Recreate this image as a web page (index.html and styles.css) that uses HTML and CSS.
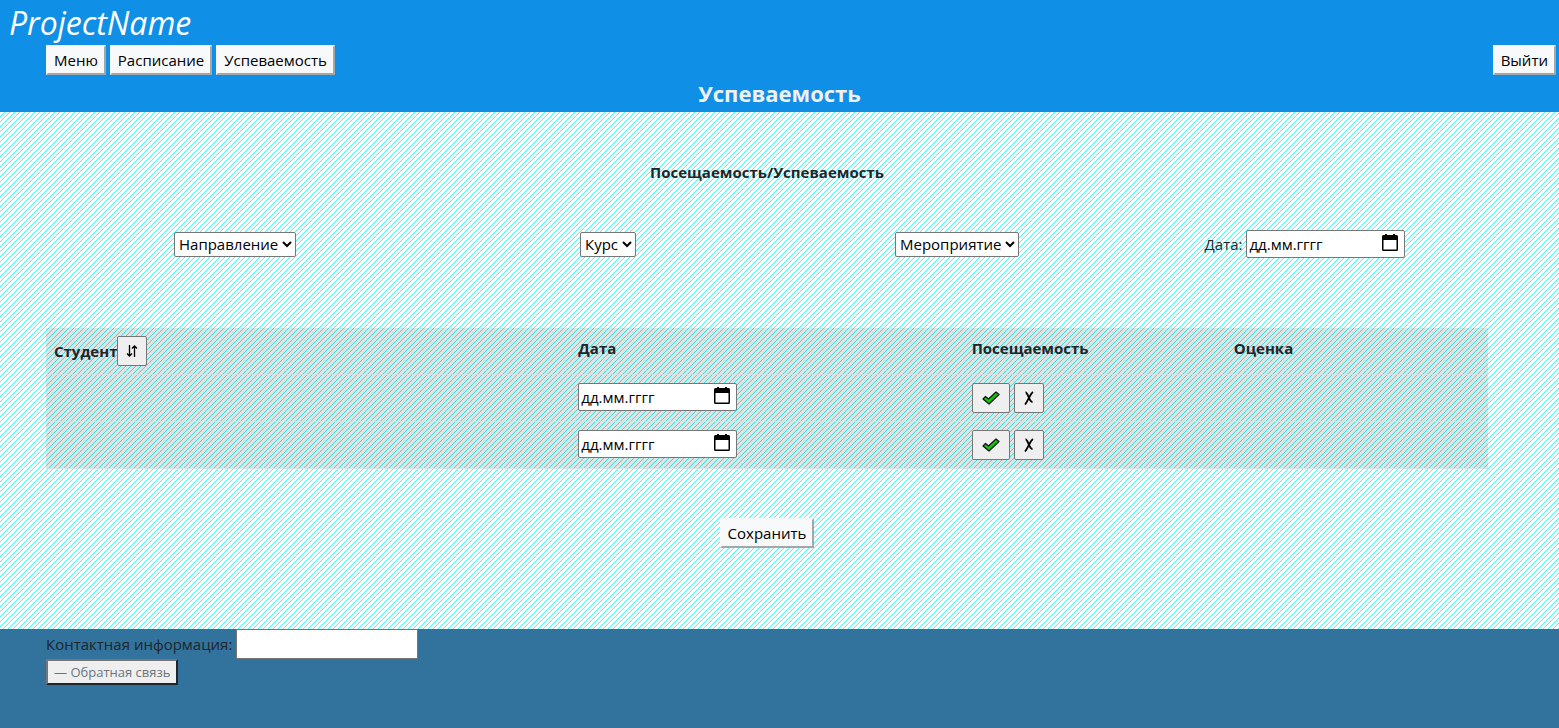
FILE: index.html
```html
<!DOCTYPE html>
<html lang="ru">
<head>
<meta charset="utf-8">
<title>Успеваемость</title>
<link rel="stylesheet" href="styles.css">
</head>
<body>
<svg class="sprite" aria-hidden="true">
  <symbol id="calendar" viewBox="0 0 16 17">
    <path d="M3 0h2v1h6V0h2v1h1.500Q16 1 16 2.500V15.500Q16 17 14.500 17h-13Q0 17 0 15.500v-13Q0 1 1.500 1H3zM1.500 6v9.500h13V6z" fill="#000" fill-rule="evenodd"/>
  </symbol>
  <symbol id="check" viewBox="0 0 18 14">
    <path d="M1 8l2.500-2.500 3 2.500L14 1l3 2.500L7 13z" fill="#16c60c" stroke="#111" stroke-width="1.200" stroke-linejoin="round"/>
  </symbol>
  <symbol id="sort" viewBox="0 0 14 14">
    <path d="M4.500 1v11M2 9.500L4.500 12 7 9.500M9.500 13V2M7 4.500L9.500 2 12 4.500" fill="none" stroke="#000" stroke-width="1.300"/>
  </symbol>
  <symbol id="cross" viewBox="0 0 10 14">
    <path d="M1.500 1.500C4 1 5 11 8.500 11M9 1C6 3 4 10 1 13.500" fill="none" stroke="#000" stroke-width="1.800"/>
  </symbol>
</svg>
<header class="header">
  <div class="brand">ProjectName</div>
  <nav class="nav">
    <button class="btn" type="button">Меню</button>
    <button class="btn" type="button">Расписание</button>
    <button class="btn" type="button">Успеваемость</button>
    <button class="btn exit" type="button">Выйти</button>
  </nav>
  <h1 class="page-title">Успеваемость</h1>
</header>
<main class="main">
  <h2 class="section-title">Посещаемость/Успеваемость</h2>
  <div class="filters">
    <select class="select" aria-label="Направление"><option>Направление</option></select>
    <select class="select" aria-label="Курс"><option>Курс</option></select>
    <select class="select" aria-label="Мероприятие"><option>Мероприятие</option></select>
    <div class="date-filter">
      <label for="date">Дата:</label>
      <span class="date"><input id="date" type="text" value="дд.мм.гггг"><svg><use href="#calendar"/></svg></span>
    </div>
  </div>
  <table class="table">
    <colgroup><col class="col-student"><col class="col-date"><col class="col-mark"><col class="col-mark"></colgroup>
    <thead>
      <tr>
        <th><span class="student">Студент<button class="tool" type="button" aria-label="Сортировать"><svg class="icon-sort"><use href="#sort"/></svg></button></span></th>
        <th>Дата</th><th>Посещаемость</th><th>Оценка</th>
      </tr>
    </thead>
    <tbody>
      <tr>
        <td></td>
        <td><span class="date"><input type="text" value="дд.мм.гггг" aria-label="Дата"><svg><use href="#calendar"/></svg></span></td>
        <td><div class="marks"><button class="tool yes" type="button" aria-label="Присутствовал"><svg class="icon-check"><use href="#check"/></svg></button><button class="tool" type="button" aria-label="Отсутствовал"><svg class="icon-cross"><use href="#cross"/></svg></button></div></td>
        <td></td>
      </tr>
      <tr>
        <td></td>
        <td><span class="date"><input type="text" value="дд.мм.гггг" aria-label="Дата"><svg><use href="#calendar"/></svg></span></td>
        <td><div class="marks"><button class="tool yes" type="button" aria-label="Присутствовал"><svg class="icon-check"><use href="#check"/></svg></button><button class="tool" type="button" aria-label="Отсутствовал"><svg class="icon-cross"><use href="#cross"/></svg></button></div></td>
        <td></td>
      </tr>
    </tbody>
  </table>
  <button class="btn save" type="button">Сохранить</button>
</main>
<footer class="footer">
  <div class="contact"><label for="contact">Контактная информация:</label><input id="contact" type="text"></div>
  <button class="feedback" type="button">— Обратная связь</button>
</footer>
</body>
</html>
```
FILE: styles.css
```css
* { box-sizing: border-box; }
body {
  margin: 0;
  min-height: 100vh;
  display: flex;
  flex-direction: column;
  font: 15px/24px "Segoe UI", "Open Sans", "Noto Sans", sans-serif;
  color: #212529;
}
button, input, select { font: inherit; color: #000; margin: 0; }
.sprite { display: none; }
.header { background: #0f90e6; }
.brand { padding-left: 9px; font-size: 32px; line-height: 45px; font-style: italic; color: #fff; }
.nav { display: flex; gap: 4px; padding: 0 3px 0 46px; }
.btn {
  height: 30px;
  padding: 0 6px;
  background: #f8f9fa;
  border: 2px solid #f8f9fa;
  border-right-color: #a5a6a7;
  border-bottom-color: #a5a6a7;
}
.exit { margin-left: auto; }
.page-title { margin: 0; padding: 4px 0 5px; font-size: 22px; line-height: 28px; text-align: center; color: #f0f0f0; }
.main {
  flex: 1;
  display: flex;
  flex-direction: column;
  padding: 48px 71px 0 46px;
  background: #fff url("data:image/svg+xml,%3Csvg xmlns='http://www.w3.org/2000/svg' width='5' height='5' shape-rendering='crispEdges'%3E%3Cpath d='M0 4h1v1H0zM1 3h1v1H1zM2 2h1v1H2zM3 1h1v1H3zM4 0h1v1H4z' fill='%2342f8fa'/%3E%3Cpath d='M0 3h1v1H0zM1 2h1v1H1zM2 1h1v1H2zM3 0h1v1H3zM4 4h1v1H4z' fill='%23ecffff'/%3E%3C/svg%3E");
}
.section-title { margin: 0; font-size: 15px; line-height: 24px; text-align: center; }
.filters {
  display: grid;
  grid-template-columns: 378fr 368fr 330fr 366fr;
  justify-items: center;
  align-items: center;
  margin-top: 46px;
}
.select { height: 25px; border: 1px solid #767676; border-radius: 2px; background: #fff; padding: 0; }
.date-filter { display: flex; align-items: center; gap: 4px; }
.date { position: relative; display: block; width: 159px; height: 28px; }
.date input { display: block; width: 100%; height: 28px; padding: 0 2px; border: 1px solid #767676; border-radius: 2px; background: #fff; }
.date svg { position: absolute; right: 7px; top: 4px; width: 16px; height: 17px; }
.table { width: 100%; margin-top: 70px; table-layout: fixed; border-collapse: separate; border-spacing: 0; background: rgba(33, 37, 41, .13); }
.table th, .table td { height: 47px; padding: 8px; text-align: left; vertical-align: top; border-bottom: 1px solid rgba(222, 226, 230, .7); }
.col-student { width: 36.36%; }
.col-date { width: 27.27%; }
.col-mark { width: 18.18%; }
.student { display: flex; align-items: center; }
.tool { display: grid; place-items: center; width: 30px; height: 30px; padding: 0; border: 1px solid #767676; border-radius: 2px; background: #efefef; }
.yes { width: 38px; }
.marks { display: flex; gap: 4px; }
.icon-sort { width: 14px; height: 14px; }
.icon-check { width: 18px; height: 14px; }
.icon-cross { width: 10px; height: 14px; }
.save { align-self: center; margin: 49px 0 81px; }
.footer { min-height: 99px; padding-left: 46px; background: #31739c; }
.contact { display: flex; align-items: center; gap: 4px; }
.contact input { width: 182px; height: 30px; border: 1px solid #767676; background: #fff; }
.feedback { display: block; height: 26px; padding: 0 6px; border: 2px solid; border-color: #767676 #212529 #212529 #767676; background: #efefef; color: #6c757d; font-size: 13px; line-height: 22px; }
```
